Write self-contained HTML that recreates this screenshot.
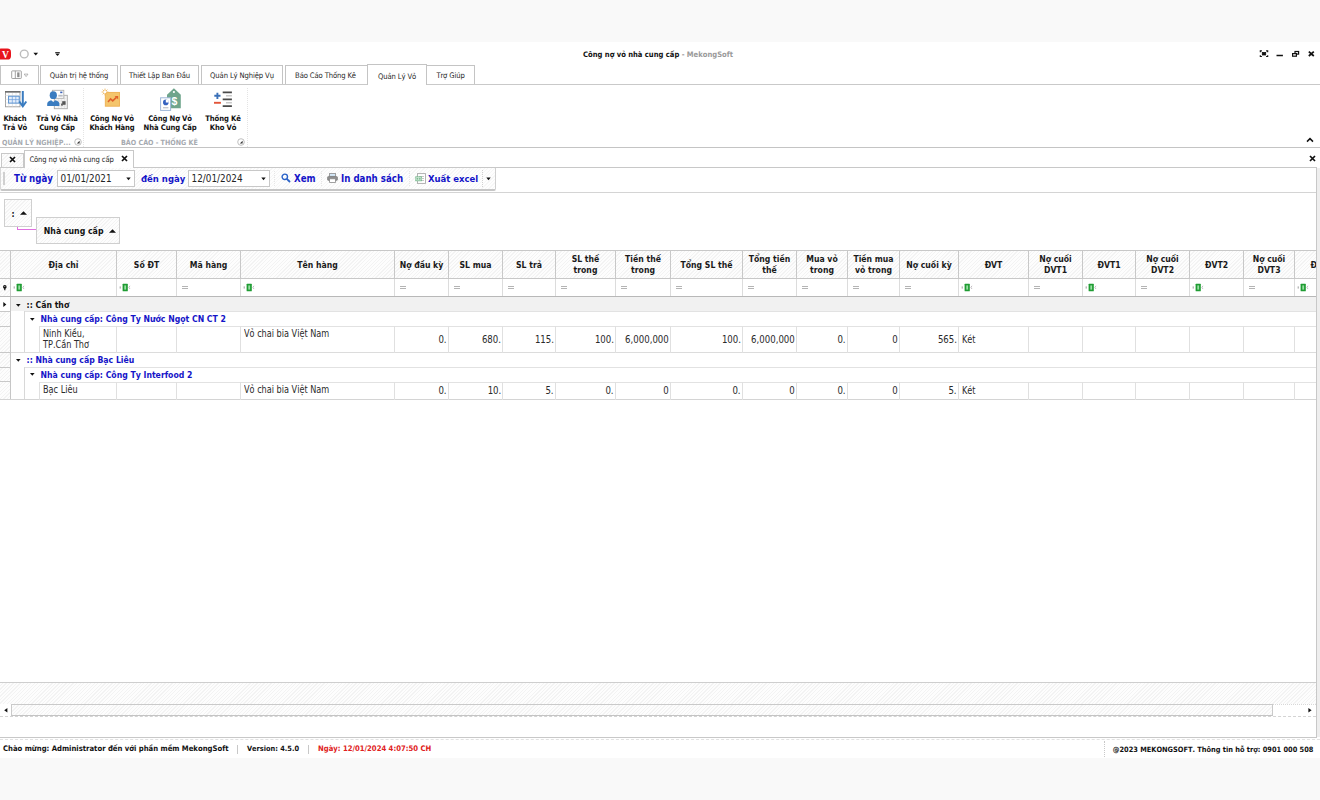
<!DOCTYPE html>
<html lang="vi"><head><meta charset="utf-8"><title>Công nợ vỏ nhà cung cấp - MekongSoft</title>
<style>
*{box-sizing:border-box;margin:0;padding:0}
html,body{width:1320px;height:800px;overflow:hidden;background:#f9f9f9;font-family:"DejaVu Sans Condensed","DejaVu Sans","Liberation Sans",sans-serif;font-size:8px;color:#222;font-kerning:none}
div,span,svg{position:absolute}
b,i{position:static}
#win{left:0;top:42px;width:1320px;height:716px;background:#fff;overflow:hidden}
.hatch2{background:repeating-linear-gradient(135deg,#fefefe 0,#fefefe 1.6px,#f6f6f6 1.6px,#f6f6f6 2.5px)}
.hatch{background:repeating-linear-gradient(135deg,#fdfdfd 0,#fdfdfd 1.6px,#f3f3f3 1.6px,#f3f3f3 2.5px)}
#title{left:0;top:0;width:1316px;height:23px;text-align:center;line-height:25.5px;font-weight:bold;font-size:7.57px;color:#111}
#title span{position:static;color:#9a9a9a}
.tab{top:23px;height:19px;border:1px solid #c4c4c4;border-bottom:none;background:#fff;text-align:center;line-height:20.8px;font-size:7.6px;letter-spacing:-.12px;color:#262626;white-space:nowrap}
.tab.act{top:22px;height:21px;line-height:23.6px;z-index:3}
#tabline{left:0;top:42px;width:1320px;height:1px;background:#c9c9c9}
#ribbon{left:0;top:43px;width:1320px;height:63px;border-bottom:1px solid #c4c4c4;background:#fff}
.rb{top:29px;text-align:center;font-weight:bold;font-size:7.6px;letter-spacing:-.1px;line-height:9px;color:#111;white-space:nowrap}
.rg{top:52.5px;font-weight:bold;font-size:7.1px;color:#a6aab0;white-space:nowrap}
.vsep{top:3px;height:59px;width:0;border-left:1px dotted #e4e4e4}
.ln{background:#c8c8c8}
.hd{top:0;height:28px;display:flex;align-items:center;justify-content:center;text-align:center;font-weight:bold;font-size:8.6px;line-height:11px;color:#1a1a1a;border-left:1px solid #c8c8c8;white-space:nowrap}
.hd b{display:block}
.cell{border-left:1px solid #e0e0e0;font-size:10px;color:#2a2a2a;white-space:nowrap;line-height:11.4px;overflow:hidden}
.sx{position:static;display:inline-block;transform:scaleX(.905);transform-origin:0 0}
.sn{position:static;display:inline-block;transform:scaleX(.955);transform-origin:100% 0}
.gr{font-weight:bold;font-size:8.65px;white-space:nowrap}
.blue{color:#1414c8}
.st{top:700.1px;font-weight:bold;font-size:7.65px;line-height:14px;white-space:nowrap;color:#111}
</style></head><body>
<div id="win">

<div id="title">Công nợ vỏ nhà cung cấp <span>- MekongSoft</span></div>
<svg style="left:0;top:6px" width="66" height="14" viewBox="0 48 66 14"><rect x="-3" y="48.6" width="14" height="10.9" rx="3.6" fill="#e8141c"/><text x="1.9" y="57.7" font-family="Liberation Serif,serif" font-weight="bold" font-size="9.6" fill="#fff">V</text><circle cx="24.25" cy="54" r="3.9" fill="#fff" stroke="#bcbcbc" stroke-width="1.4"/><path d="M33.4 52.7h4.7L35.75 55.4z" fill="#111"/><rect x="55.2" y="52.1" width="4.6" height=".9" fill="#222"/><path d="M55.2 53.5h4.6L57.5 55.9z" fill="#111"/></svg>
<svg style="left:1258px;top:6px" width="60" height="12" viewBox="1258 48 60 12"><g stroke="#111" fill="none"><rect x="1262.3" y="52.4" width="3.4" height="2.6" fill="#111" stroke="#111" stroke-width=".8"/><path d="M1260.3 52.2V50.9h1.6M1267.7 52.2V50.9h-1.6M1260.3 55.2v1.3h1.6M1267.7 55.2v1.3h-1.6" stroke-width="1.1"/><path d="M1276.5 55.5h6.4" stroke-width="1.5"/><rect x="1295" y="51.5" width="3.6" height="2.6" stroke-width="1.2"/><rect x="1292.6" y="53.6" width="3.8" height="2.6" fill="#fff" stroke-width="1.2"/><path d="M1308.8 51.6l5 4.4M1313.8 51.6l-5 4.4" stroke-width="1.7"/></g></svg>
<div id="tabline"></div>
<div class="tab" style="left:0;width:39px"></div>
<svg style="left:11px;top:28px;z-index:4" width="20" height="10" viewBox="11 70 20 10"><rect x="11.7" y="70.9" width="9.6" height="7.6" rx=".6" fill="#fff" stroke="#9a9a9a" stroke-width=".9"/><path d="M15.3 70.9v7.6" stroke="#9a9a9a" stroke-width=".9"/><rect x="17.2" y="72.4" width="2.3" height="4.8" fill="#8c8c8c"/><path d="M24.2 74.1h3.8L26.1 76.6z" fill="#fff" stroke="#9a9a9a" stroke-width=".7"/></svg>
<div class="tab" style="left:40px;width:78px">Quản trị hệ thống</div>
<div class="tab" style="left:120px;width:79px">Thiết Lập Ban Đầu</div>
<div class="tab" style="left:201px;width:82px">Quản Lý Nghiệp Vụ</div>
<div class="tab" style="left:285px;width:83px;padding-right:2px">Báo Cáo Thống Kê</div>
<div class="tab act" style="left:367px;width:60px">Quản Lý Vỏ</div>
<div class="tab" style="left:426px;width:49px">Trợ Giúp</div>
<div id="ribbon">
<div class="rb" style="left:-10px;width:50px">Khách<br>Trả Vỏ</div>
<div class="rb" style="left:27px;width:60px">Trả Vỏ Nhà<br>Cung Cấp</div>
<div class="rb" style="left:82px;width:60px">Công Nợ Vỏ<br>Khách Hàng</div>
<div class="rb" style="left:135px;width:70px">Công Nợ Vỏ<br>Nhà Cung Cấp</div>
<div class="rb" style="left:198px;width:50px">Thống Kê<br>Kho Vỏ</div>
<div class="rg" style="left:2px">QUẢN LÝ NGHIỆP...</div>
<div class="rg" style="left:121px">BÁO CÁO - THỐNG KÊ</div>
<div class="vsep" style="left:83px"></div><div class="vsep" style="left:247px"></div>
<svg style="left:0;top:0" width="260" height="30" viewBox="0 0 260 30"><rect x="5.5" y="6.8" width="14.5" height="15" fill="#fff" stroke="#9a9a9a" stroke-width="0.9"/><rect x="5" y="6" width="15.5" height="1.6" fill="#6e6e6e"/><path d="M8.8 8V21.5M12.4 8V21.5M16 8V21.5M5.5 10.5H20M5.5 14.3H20M5.5 18H20" stroke="#dcdcdc" stroke-width=".7" fill="none"/><rect x="8.6" y="11.2" width="10.6" height="6.9" fill="#e4eefa" stroke="#4a88cc" stroke-width=".9"/><path d="M12.3 11.2v6.9M15.8 11.2v6.9M8.6 14.6h10.6" stroke="#6a9edc" stroke-width=".7"/><path d="M22.8 6V20.5" stroke="#3a7cc0" stroke-width="2"/><path d="M19.3 16.5L22.8 21.3L26.3 16.5" fill="none" stroke="#3a7cc0" stroke-width="2"/><rect x="54.3" y="10.3" width="13" height="13.4" fill="#f4f4f4" stroke="#a8a8a8" stroke-width=".9"/><path d="M57 13.5h9M57 16h9M57 18.5h9M57 21h9M58.5 11v12M61.5 11v12M64.5 11v12" stroke="#dedede" stroke-width=".6"/><rect x="62.2" y="16.2" width="3.4" height="3.6" fill="#555"/><rect x="61" y="18.6" width="2" height="2" fill="#666"/><rect x="52.4" y="5.3" width="11.4" height="8" fill="#fff" stroke="#b0b0b0" stroke-width=".9"/><rect x="60.2" y="6.6" width="2.2" height="1.6" fill="#3a62b8"/><rect x="58.3" y="9.8" width="4.4" height="1.8" fill="#b8bcc4"/><ellipse cx="53.3" cy="10.2" rx="3.6" ry="3.9" fill="#3a7cc0"/><path d="M47.2 21v-2.2c0-2 2-3 4-3.6l2.1 1.9 2.1-1.9c2 .6 4 1.6 4 3.6v2.2z" fill="#3a7cc0"/><rect x="105.3" y="7.4" width="14.2" height="13.8" fill="#f4c56c" stroke="#eeb050" stroke-width=".9"/><path d="M108 17L110.6 13.9L112.7 15.9L116.4 12.4" fill="none" stroke="#e0602a" stroke-width="1.5"/><path d="M114.6 11L118.2 11L118.2 14.6z" fill="#e0602a"/><g stroke="#eeb860" stroke-width=".9"><path d="M105 3.6v6.8M101.6 7h6.8M102.6 4.6l4.8 4.8M107.4 4.6l-4.8 4.8"/></g><circle cx="105" cy="7" r="1.3" fill="#fff"/><path d="M173.9 3.3L180.8 9.8V23.3H167V9.8z" fill="#6fa58c"/><circle cx="173.9" cy="7" r="1.1" fill="#fff"/><text x="171.5" y="19.8" font-family="Liberation Sans,sans-serif" font-weight="bold" font-size="10.5" fill="#fff">$</text><rect x="160.6" y="12.8" width="10" height="12.6" fill="#fff" stroke="#9db6d8" stroke-width="1"/><circle cx="165.8" cy="17.4" r="2.8" fill="#3462c0"/><path d="M165.8 17.4V14.4A3 3 0 0 1 168.8 17.4z" fill="#fff"/><rect x="163" y="22" width="5.4" height="1.4" fill="#c4c8d0"/><path d="M217.4 7.7v6.2M214.3 10.8h6.2" stroke="#3a70b8" stroke-width="1.9"/><path d="M214 17.8h6.9" stroke="#e2553a" stroke-width="1.9"/><path d="M222.7 7.4h9.2M222.7 14.3h9.2M222.7 21.1h9.2" stroke="#4a4a4a" stroke-width="1.8"/><path d="M226 10.8h5.9M226 17.7h5.9" stroke="#c8c8c8" stroke-width="1.4"/></svg><svg style="left:74px;top:52.5px" width="8" height="8" viewBox="0 0 8 8"><circle cx="4" cy="4" r="3.3" fill="#fff" stroke="#b0b0b0" stroke-width=".8"/><path d="M5.6 2.8v2.8H2.8z" fill="#333"/></svg><svg style="left:237px;top:52.5px" width="8" height="8" viewBox="0 0 8 8"><circle cx="4" cy="4" r="3.3" fill="#fff" stroke="#b0b0b0" stroke-width=".8"/><path d="M5.6 2.8v2.8H2.8z" fill="#333"/></svg>
</div>
<svg style="left:1306px;top:95px" width="8" height="6" viewBox="0 0 8 6"><path d="M1 4.6L4 1.6l3 3" fill="none" stroke="#111" stroke-width="1.5"/></svg>
<div class="ln" style="left:0;top:125px;width:1317px;height:1px"></div>
<div class="hatch" style="left:1px;top:111px;width:23px;height:14px;border:1px solid #c8c8c8;border-bottom:none"></div>
<div style="left:24px;top:108px;width:110px;height:18px;border:1px solid #c8c8c8;border-bottom:none;background:#fff;font-size:7.6px;letter-spacing:-.12px;line-height:18px;padding-left:4.4px;color:#262626;white-space:nowrap">Công nợ vỏ nhà cung cấp</div>
<svg style="left:9px;top:114px" width="7" height="7" viewBox="0 0 7 7"><path d="M1 1l5 5M6 1l-5 5" stroke="#111" stroke-width="1.7" fill="none"/></svg>
<svg style="left:121px;top:113px" width="7" height="7" viewBox="0 0 7 7"><path d="M1 1l5 5M6 1l-5 5" stroke="#111" stroke-width="1.7" fill="none"/></svg>
<svg style="left:1309px;top:113px" width="7" height="7" viewBox="0 0 7 7"><path d="M1 1l5 5M6 1l-5 5" stroke="#111" stroke-width="1.7" fill="none"/></svg>
<div class="ln" style="left:1316px;top:125px;width:1px;height:570px"></div>
<div style="left:1317px;top:126px;width:3px;height:569px;background:#eeeeee"></div>
<div class="ln" style="left:0;top:695px;width:1317px;height:1px"></div>
<div class="hatch2" style="left:0;top:126px;width:495.5px;height:22.6px;border:1.3px solid #d0d0d0;border-bottom:2px solid #c6c6c6;border-top:none;border-left:1px solid #d8d8d8;border-radius:0 0 2px 2px"></div>
<div style="left:3px;top:130px;width:2px;height:13px;background:#d0d0d0"></div>
<div class="ln" style="left:0;top:150px;width:1316px;height:1px;background:#d4d4d4"></div>
<div style="left:14px;top:130.8px;font-weight:bold;font-size:9.65px;color:#1414c8;white-space:nowrap;line-height:12px">Từ ngày</div>
<div style="left:57px;top:128px;width:78px;height:17px;border:1px solid #c8c8c8;background:#fff;font-size:9.85px;line-height:16px;padding-left:2.6px;color:#222">01/01/2021</div>
<div style="left:141px;top:130.8px;font-weight:bold;font-size:9.65px;color:#1414c8;white-space:nowrap;line-height:12px;font-size:9.45px">đến ngày</div>
<div style="left:188px;top:128px;width:82px;height:17px;border:1px solid #c8c8c8;background:#fff;font-size:9.85px;line-height:16px;padding-left:2.6px;color:#222">12/01/2024</div>
<svg style="left:126px;top:135px" width="5" height="4" viewBox="0 0 5 4"><path d="M0.3 0.5h4.4L2.5 3.2z" fill="#111"/></svg>
<svg style="left:261px;top:135px" width="5" height="4" viewBox="0 0 5 4"><path d="M0.3 0.5h4.4L2.5 3.2z" fill="#111"/></svg>
<svg style="left:486px;top:135px" width="5" height="4" viewBox="0 0 5 4"><path d="M0.3 0.5h4.4L2.5 3.2z" fill="#111"/></svg>
<svg style="left:280.8px;top:131px" width="10" height="10" viewBox="0 0 10 10"><circle cx="3.8" cy="3.8" r="2.7" fill="none" stroke="#2a62c8" stroke-width="1.4"/><path d="M5.8 5.8L9 9" stroke="#2a62c8" stroke-width="1.8"/></svg>
<div style="left:294px;top:130.8px;font-weight:bold;font-size:9.65px;color:#1414c8;white-space:nowrap;line-height:12px">Xem</div>
<svg style="left:327px;top:131px" width="11" height="10" viewBox="0 0 11 10"><rect x="2.6" y="0.5" width="5.8" height="3.2" fill="#d4e8f8" stroke="#8a8a8a" stroke-width=".8"/><rect x="0.5" y="3.4" width="10" height="4" rx="1.2" fill="#8e8e8e" stroke="#777" stroke-width=".6"/><rect x="2.6" y="5.8" width="5.8" height="3.6" fill="#fff" stroke="#8a8a8a" stroke-width=".8"/></svg>
<div style="left:341px;top:130.8px;font-weight:bold;font-size:9.65px;color:#1414c8;white-space:nowrap;line-height:12px">In danh sách</div>
<svg style="left:415px;top:131px" width="11" height="11" viewBox="0 0 11 11"><rect x="2.5" y="0.6" width="8" height="9.8" fill="#fff" stroke="#aaaaaa" stroke-width=".9"/><path d="M4 3.5h5M4 5.5h5M4 7.5h5" stroke="#b8b8b8" stroke-width=".8"/><rect x="0.3" y="3.4" width="6.6" height="4.8" fill="#74b88a"/><path d="M1.2 4.6h4.8v2.4H1.2zM3.6 4.6v2.4" stroke="#e8f4ec" stroke-width=".7" fill="none"/></svg>
<div style="left:428px;top:130.8px;font-weight:bold;font-size:9.65px;color:#1414c8;white-space:nowrap;line-height:12px;font-size:9.45px">Xuất excel</div>
<div style="left:482px;top:128px;width:0;height:17px;border-left:1px dotted #d0d0d0"></div>
<div style="left:274px;top:129px;width:0;height:15px;border-left:1px dotted #e6e6e6"></div>
<div style="left:321px;top:129px;width:0;height:15px;border-left:1px dotted #e6e6e6"></div>
<div style="left:409px;top:129px;width:0;height:15px;border-left:1px dotted #e6e6e6"></div>
<div class="hatch" style="left:4px;top:157px;width:28px;height:28px;border:1px solid #cfcfcf"></div>
<div style="left:11.5px;top:166px;font-weight:bold;font-size:8.6px;line-height:12px;color:#111">:</div>
<svg style="left:20.3px;top:169px" width="7" height="4" viewBox="0 0 7 4"><path d="M0 3.8h7L3.5 0.2z" fill="#111"/></svg>
<div style="left:17px;top:185px;width:19px;height:3px;border-left:1px solid #e070e0;border-bottom:1px solid #e070e0"></div>
<div class="hatch" style="left:36px;top:175px;width:84px;height:27px;border:1px solid #cfcfcf;font-weight:bold;font-size:8.7px;line-height:26px;padding-left:6.8px;color:#111;white-space:nowrap">Nhà cung cấp</div>
<svg style="left:109px;top:186.6px" width="7" height="4" viewBox="0 0 7 4"><path d="M0 3.8h7L3.5 0.2z" fill="#111"/></svg>
<div class="ln" style="left:0;top:208px;width:1316px;height:1px"></div>
<div class="hatch" style="left:0;top:209px;width:1316px;height:28px;overflow:hidden">
<div class="hd" style="left:10px;width:106px"><span style="position:static">Địa chỉ</span></div>
<div class="hd" style="left:116px;width:60px"><span style="position:static">Số ĐT</span></div>
<div class="hd" style="left:176px;width:64px"><span style="position:static">Mã hàng</span></div>
<div class="hd" style="left:240px;width:154px"><span style="position:static">Tên hàng</span></div>
<div class="hd" style="left:394px;width:54px"><span style="position:static">Nợ đầu kỳ</span></div>
<div class="hd" style="left:448px;width:54px"><span style="position:static">SL mua</span></div>
<div class="hd" style="left:502px;width:53px"><span style="position:static">SL trả</span></div>
<div class="hd" style="left:555px;width:60px"><span style="position:static">SL thế<br>trong</span></div>
<div class="hd" style="left:615px;width:55px"><span style="position:static">Tiền thế<br>trong</span></div>
<div class="hd" style="left:670px;width:72px"><span style="position:static">Tổng SL thế</span></div>
<div class="hd" style="left:742px;width:54px"><span style="position:static">Tổng tiền<br>thế</span></div>
<div class="hd" style="left:796px;width:51px"><span style="position:static">Mua vỏ<br>trong</span></div>
<div class="hd" style="left:847px;width:52px"><span style="position:static">Tiền mua<br>vỏ trong</span></div>
<div class="hd" style="left:899px;width:59px"><span style="position:static">Nợ cuối kỳ</span></div>
<div class="hd" style="left:958px;width:70px"><span style="position:static">ĐVT</span></div>
<div class="hd" style="left:1028px;width:54px"><span style="position:static">Nợ cuối<br>DVT1</span></div>
<div class="hd" style="left:1082px;width:53px"><span style="position:static">ĐVT1</span></div>
<div class="hd" style="left:1135px;width:54px"><span style="position:static">Nợ cuối<br>DVT2</span></div>
<div class="hd" style="left:1189px;width:54px"><span style="position:static">ĐVT2</span></div>
<div class="hd" style="left:1243px;width:51px"><span style="position:static">Nợ cuối<br>DVT3</span></div>
<div class="hd" style="left:1294px;width:55px"><span style="position:static">ĐVT3</span></div>
</div>
<div class="ln" style="left:0;top:236px;width:1316px;height:1px"></div>
<div style="left:0;top:237px;width:1316px;height:17px;background:#fff;overflow:hidden">
<div style="left:10px;top:0;width:1px;height:17px;background:#dcdcdc"></div>
<svg style="left:13px;top:3.5px" width="12" height="9" viewBox="0 0 12 9"><rect x="3.6" y="0.7" width="5.2" height="7.5" rx=".5" fill="#1f9c33"/><rect x="5.3" y="2.4" width="1.8" height="4.2" fill="#9adfa4"/><path d="M1.2 3.4v2.2" stroke="#9a9a9a" stroke-width="1"/><path d="M11 2.8L9.9 4.4L11 6" stroke="#a8a0a8" stroke-width=".7" fill="none"/></svg>
<div style="left:116px;top:0;width:1px;height:17px;background:#dcdcdc"></div>
<svg style="left:119px;top:3.5px" width="12" height="9" viewBox="0 0 12 9"><rect x="3.6" y="0.7" width="5.2" height="7.5" rx=".5" fill="#1f9c33"/><rect x="5.3" y="2.4" width="1.8" height="4.2" fill="#9adfa4"/><path d="M1.2 3.4v2.2" stroke="#9a9a9a" stroke-width="1"/><path d="M11 2.8L9.9 4.4L11 6" stroke="#a8a0a8" stroke-width=".7" fill="none"/></svg>
<div style="left:176px;top:0;width:1px;height:17px;background:#dcdcdc"></div>
<div style="left:182px;top:7px;width:6px;height:1px;background:#b4b4b4"></div><div style="left:182px;top:9px;width:6px;height:1px;background:#b4b4b4"></div>
<div style="left:240px;top:0;width:1px;height:17px;background:#dcdcdc"></div>
<svg style="left:243px;top:3.5px" width="12" height="9" viewBox="0 0 12 9"><rect x="3.6" y="0.7" width="5.2" height="7.5" rx=".5" fill="#1f9c33"/><rect x="5.3" y="2.4" width="1.8" height="4.2" fill="#9adfa4"/><path d="M1.2 3.4v2.2" stroke="#9a9a9a" stroke-width="1"/><path d="M11 2.8L9.9 4.4L11 6" stroke="#a8a0a8" stroke-width=".7" fill="none"/></svg>
<div style="left:394px;top:0;width:1px;height:17px;background:#dcdcdc"></div>
<div style="left:400px;top:7px;width:6px;height:1px;background:#b4b4b4"></div><div style="left:400px;top:9px;width:6px;height:1px;background:#b4b4b4"></div>
<div style="left:448px;top:0;width:1px;height:17px;background:#dcdcdc"></div>
<div style="left:454px;top:7px;width:6px;height:1px;background:#b4b4b4"></div><div style="left:454px;top:9px;width:6px;height:1px;background:#b4b4b4"></div>
<div style="left:502px;top:0;width:1px;height:17px;background:#dcdcdc"></div>
<div style="left:508px;top:7px;width:6px;height:1px;background:#b4b4b4"></div><div style="left:508px;top:9px;width:6px;height:1px;background:#b4b4b4"></div>
<div style="left:555px;top:0;width:1px;height:17px;background:#dcdcdc"></div>
<div style="left:561px;top:7px;width:6px;height:1px;background:#b4b4b4"></div><div style="left:561px;top:9px;width:6px;height:1px;background:#b4b4b4"></div>
<div style="left:615px;top:0;width:1px;height:17px;background:#dcdcdc"></div>
<div style="left:621px;top:7px;width:6px;height:1px;background:#b4b4b4"></div><div style="left:621px;top:9px;width:6px;height:1px;background:#b4b4b4"></div>
<div style="left:670px;top:0;width:1px;height:17px;background:#dcdcdc"></div>
<div style="left:676px;top:7px;width:6px;height:1px;background:#b4b4b4"></div><div style="left:676px;top:9px;width:6px;height:1px;background:#b4b4b4"></div>
<div style="left:742px;top:0;width:1px;height:17px;background:#dcdcdc"></div>
<div style="left:748px;top:7px;width:6px;height:1px;background:#b4b4b4"></div><div style="left:748px;top:9px;width:6px;height:1px;background:#b4b4b4"></div>
<div style="left:796px;top:0;width:1px;height:17px;background:#dcdcdc"></div>
<div style="left:802px;top:7px;width:6px;height:1px;background:#b4b4b4"></div><div style="left:802px;top:9px;width:6px;height:1px;background:#b4b4b4"></div>
<div style="left:847px;top:0;width:1px;height:17px;background:#dcdcdc"></div>
<div style="left:853px;top:7px;width:6px;height:1px;background:#b4b4b4"></div><div style="left:853px;top:9px;width:6px;height:1px;background:#b4b4b4"></div>
<div style="left:899px;top:0;width:1px;height:17px;background:#dcdcdc"></div>
<div style="left:905px;top:7px;width:6px;height:1px;background:#b4b4b4"></div><div style="left:905px;top:9px;width:6px;height:1px;background:#b4b4b4"></div>
<div style="left:958px;top:0;width:1px;height:17px;background:#dcdcdc"></div>
<svg style="left:961px;top:3.5px" width="12" height="9" viewBox="0 0 12 9"><rect x="3.6" y="0.7" width="5.2" height="7.5" rx=".5" fill="#1f9c33"/><rect x="5.3" y="2.4" width="1.8" height="4.2" fill="#9adfa4"/><path d="M1.2 3.4v2.2" stroke="#9a9a9a" stroke-width="1"/><path d="M11 2.8L9.9 4.4L11 6" stroke="#a8a0a8" stroke-width=".7" fill="none"/></svg>
<div style="left:1028px;top:0;width:1px;height:17px;background:#dcdcdc"></div>
<div style="left:1034px;top:7px;width:6px;height:1px;background:#b4b4b4"></div><div style="left:1034px;top:9px;width:6px;height:1px;background:#b4b4b4"></div>
<div style="left:1082px;top:0;width:1px;height:17px;background:#dcdcdc"></div>
<svg style="left:1085px;top:3.5px" width="12" height="9" viewBox="0 0 12 9"><rect x="3.6" y="0.7" width="5.2" height="7.5" rx=".5" fill="#1f9c33"/><rect x="5.3" y="2.4" width="1.8" height="4.2" fill="#9adfa4"/><path d="M1.2 3.4v2.2" stroke="#9a9a9a" stroke-width="1"/><path d="M11 2.8L9.9 4.4L11 6" stroke="#a8a0a8" stroke-width=".7" fill="none"/></svg>
<div style="left:1135px;top:0;width:1px;height:17px;background:#dcdcdc"></div>
<div style="left:1141px;top:7px;width:6px;height:1px;background:#b4b4b4"></div><div style="left:1141px;top:9px;width:6px;height:1px;background:#b4b4b4"></div>
<div style="left:1189px;top:0;width:1px;height:17px;background:#dcdcdc"></div>
<svg style="left:1192px;top:3.5px" width="12" height="9" viewBox="0 0 12 9"><rect x="3.6" y="0.7" width="5.2" height="7.5" rx=".5" fill="#1f9c33"/><rect x="5.3" y="2.4" width="1.8" height="4.2" fill="#9adfa4"/><path d="M1.2 3.4v2.2" stroke="#9a9a9a" stroke-width="1"/><path d="M11 2.8L9.9 4.4L11 6" stroke="#a8a0a8" stroke-width=".7" fill="none"/></svg>
<div style="left:1243px;top:0;width:1px;height:17px;background:#dcdcdc"></div>
<div style="left:1249px;top:7px;width:6px;height:1px;background:#b4b4b4"></div><div style="left:1249px;top:9px;width:6px;height:1px;background:#b4b4b4"></div>
<div style="left:1294px;top:0;width:1px;height:17px;background:#dcdcdc"></div>
<svg style="left:1297px;top:3.5px" width="12" height="9" viewBox="0 0 12 9"><rect x="3.6" y="0.7" width="5.2" height="7.5" rx=".5" fill="#1f9c33"/><rect x="5.3" y="2.4" width="1.8" height="4.2" fill="#9adfa4"/><path d="M1.2 3.4v2.2" stroke="#9a9a9a" stroke-width="1"/><path d="M11 2.8L9.9 4.4L11 6" stroke="#a8a0a8" stroke-width=".7" fill="none"/></svg>
</div>
<div style="left:0;top:254px;width:1316px;height:1px;background:#b8b8b8"></div>
<div class="hatch" style="left:0;top:255px;width:11px;height:103px;border-right:1px solid #c6c6c6"></div>
<div class="hatch2" style="left:0;top:237px;width:11px;height:17px;border-right:1px solid #c6c6c6"></div>
<svg style="left:2px;top:243px" width="6" height="6" viewBox="0 0 6 6"><circle cx="2.8" cy="1.9" r="1.8" fill="#111"/><path d="M2.8 2v3.2" stroke="#111" stroke-width="1.2"/><circle cx="2.8" cy="1.5" r=".5" fill="#ddd"/></svg>
<div style="left:0;top:255px;width:11px;height:14px;background:#fff;border-right:1px solid #c6c6c6"></div>
<div style="left:0;top:269px;width:10px;height:1px;background:#c8c8c8"></div>
<div style="left:0;top:284px;width:10px;height:1px;background:#c8c8c8"></div>
<div style="left:0;top:310px;width:10px;height:1px;background:#c8c8c8"></div>
<div style="left:0;top:325px;width:10px;height:1px;background:#c8c8c8"></div>
<div style="left:0;top:339px;width:10px;height:1px;background:#c8c8c8"></div>
<svg style="left:3px;top:260.2px" width="4" height="5" viewBox="0 0 4 5"><path d="M0.3 0v5L3.3 2.5z" fill="#111"/></svg>
<div style="left:11px;top:255px;width:1305px;height:14.4px;background:#f1f1f1"></div>
<div style="left:24px;top:269px;width:1292px;height:1px;background:#e2e2e2"></div>
<div style="left:39px;top:283.6px;width:1277px;height:1px;background:#e2e2e2"></div>
<div style="left:11px;top:310px;width:1305px;height:1px;background:#dcdcdc"></div>
<div style="left:24px;top:325px;width:1292px;height:1px;background:#e2e2e2"></div>
<div style="left:39px;top:339.6px;width:1277px;height:1px;background:#e2e2e2"></div>
<div style="left:0px;top:357px;width:1316px;height:1px;background:#d4d4d4"></div>
<div style="left:24px;top:269px;width:1px;height:41px;background:#d8d8d8"></div>
<div style="left:24px;top:325px;width:1px;height:32px;background:#d8d8d8"></div>
<svg style="left:15.5px;top:261.5px" width="5" height="3" viewBox="0 0 5 3"><path d="M0 0h4.6L2.3 2.8z" fill="#111"/></svg>
<div class="gr" style="left:26.6px;top:256.9px;line-height:12px;color:#111">:: Cần thơ</div>
<svg style="left:29.5px;top:275.8px" width="5" height="3" viewBox="0 0 5 3"><path d="M0 0h4.6L2.3 2.8z" fill="#111"/></svg>
<div class="gr blue" style="left:40.6px;top:271.2px;line-height:12px;">Nhà cung cấp: Công Ty Nước Ngọt CN CT 2</div>
<svg style="left:15.5px;top:316.6px" width="5" height="3" viewBox="0 0 5 3"><path d="M0 0h4.6L2.3 2.8z" fill="#111"/></svg>
<div class="gr blue" style="left:26.6px;top:312.0px;line-height:12px;">:: Nhà cung cấp Bạc Liêu</div>
<svg style="left:29.5px;top:331.3px" width="5" height="3" viewBox="0 0 5 3"><path d="M0 0h4.6L2.3 2.8z" fill="#111"/></svg>
<div class="gr blue" style="left:40.6px;top:326.7px;line-height:12px;">Nhà cung cấp: Công Ty Interfood 2</div>
<div style="left:39px;top:284px;width:1277px;height:27px;overflow:hidden">
<div class="cell" style="left:0px;top:0;width:77px;height:27px;padding-left:3px;padding-top:1.6px"><span class="sx">Ninh Kiều,<br>TP.Cần Thơ</span></div>
<div class="cell" style="left:77px;top:0;width:60px;height:27px;padding-left:3px;padding-top:1.6px"></div>
<div class="cell" style="left:137px;top:0;width:64px;height:27px;padding-left:3px;padding-top:1.6px"></div>
<div class="cell" style="left:201px;top:0;width:154px;height:27px;padding-left:3px;padding-top:1.6px"><span class="sx">Vỏ chai bia Việt Nam</span></div>
<div class="cell" style="left:355px;top:0;width:54px;height:27px;padding-right:1px;text-align:right;line-height:27px"><span class="sn">0.</span></div>
<div class="cell" style="left:409px;top:0;width:54px;height:27px;padding-right:1px;text-align:right;line-height:27px"><span class="sn">680.</span></div>
<div class="cell" style="left:463px;top:0;width:53px;height:27px;padding-right:1px;text-align:right;line-height:27px"><span class="sn">115.</span></div>
<div class="cell" style="left:516px;top:0;width:60px;height:27px;padding-right:1px;text-align:right;line-height:27px"><span class="sn">100.</span></div>
<div class="cell" style="left:576px;top:0;width:55px;height:27px;padding-right:1px;text-align:right;line-height:27px"><span class="sn">6,000,000</span></div>
<div class="cell" style="left:631px;top:0;width:72px;height:27px;padding-right:1px;text-align:right;line-height:27px"><span class="sn">100.</span></div>
<div class="cell" style="left:703px;top:0;width:54px;height:27px;padding-right:1px;text-align:right;line-height:27px"><span class="sn">6,000,000</span></div>
<div class="cell" style="left:757px;top:0;width:51px;height:27px;padding-right:1px;text-align:right;line-height:27px"><span class="sn">0.</span></div>
<div class="cell" style="left:808px;top:0;width:52px;height:27px;padding-right:1px;text-align:right;line-height:27px"><span class="sn">0</span></div>
<div class="cell" style="left:860px;top:0;width:59px;height:27px;padding-right:1px;text-align:right;line-height:27px"><span class="sn">565.</span></div>
<div class="cell" style="left:919px;top:0;width:70px;height:27px;padding-left:3px;line-height:27px"><span class="sx">Két</span></div>
<div class="cell" style="left:989px;top:0;width:54px;height:27px;padding-left:3px;padding-top:1.6px"></div>
<div class="cell" style="left:1043px;top:0;width:53px;height:27px;padding-left:3px;padding-top:1.6px"></div>
<div class="cell" style="left:1096px;top:0;width:54px;height:27px;padding-left:3px;padding-top:1.6px"></div>
<div class="cell" style="left:1150px;top:0;width:54px;height:27px;padding-left:3px;padding-top:1.6px"></div>
<div class="cell" style="left:1204px;top:0;width:51px;height:27px;padding-left:3px;padding-top:1.6px"></div>
<div class="cell" style="left:1255px;top:0;width:55px;height:27px;padding-left:3px;padding-top:1.6px"></div>
</div>
<div style="left:39px;top:340px;width:1277px;height:18px;overflow:hidden">
<div class="cell" style="left:0px;top:0;width:77px;height:18px;padding-left:3px;padding-top:1.6px"><span class="sx">Bạc Liêu</span></div>
<div class="cell" style="left:77px;top:0;width:60px;height:18px;padding-left:3px;padding-top:1.6px"></div>
<div class="cell" style="left:137px;top:0;width:64px;height:18px;padding-left:3px;padding-top:1.6px"></div>
<div class="cell" style="left:201px;top:0;width:154px;height:18px;padding-left:3px;padding-top:1.6px"><span class="sx">Vỏ chai bia Việt Nam</span></div>
<div class="cell" style="left:355px;top:0;width:54px;height:18px;padding-right:1px;text-align:right;line-height:18px"><span class="sn">0.</span></div>
<div class="cell" style="left:409px;top:0;width:54px;height:18px;padding-right:1px;text-align:right;line-height:18px"><span class="sn">10.</span></div>
<div class="cell" style="left:463px;top:0;width:53px;height:18px;padding-right:1px;text-align:right;line-height:18px"><span class="sn">5.</span></div>
<div class="cell" style="left:516px;top:0;width:60px;height:18px;padding-right:1px;text-align:right;line-height:18px"><span class="sn">0.</span></div>
<div class="cell" style="left:576px;top:0;width:55px;height:18px;padding-right:1px;text-align:right;line-height:18px"><span class="sn">0</span></div>
<div class="cell" style="left:631px;top:0;width:72px;height:18px;padding-right:1px;text-align:right;line-height:18px"><span class="sn">0.</span></div>
<div class="cell" style="left:703px;top:0;width:54px;height:18px;padding-right:1px;text-align:right;line-height:18px"><span class="sn">0</span></div>
<div class="cell" style="left:757px;top:0;width:51px;height:18px;padding-right:1px;text-align:right;line-height:18px"><span class="sn">0.</span></div>
<div class="cell" style="left:808px;top:0;width:52px;height:18px;padding-right:1px;text-align:right;line-height:18px"><span class="sn">0</span></div>
<div class="cell" style="left:860px;top:0;width:59px;height:18px;padding-right:1px;text-align:right;line-height:18px"><span class="sn">5.</span></div>
<div class="cell" style="left:919px;top:0;width:70px;height:18px;padding-left:3px;line-height:18px"><span class="sx">Két</span></div>
<div class="cell" style="left:989px;top:0;width:54px;height:18px;padding-left:3px;padding-top:1.6px"></div>
<div class="cell" style="left:1043px;top:0;width:53px;height:18px;padding-left:3px;padding-top:1.6px"></div>
<div class="cell" style="left:1096px;top:0;width:54px;height:18px;padding-left:3px;padding-top:1.6px"></div>
<div class="cell" style="left:1150px;top:0;width:54px;height:18px;padding-left:3px;padding-top:1.6px"></div>
<div class="cell" style="left:1204px;top:0;width:51px;height:18px;padding-left:3px;padding-top:1.6px"></div>
<div class="cell" style="left:1255px;top:0;width:55px;height:18px;padding-left:3px;padding-top:1.6px"></div>
</div>
<div style="left:0;top:640px;width:1316px;height:1px;background:#cecece"></div>
<div class="hatch" style="left:0;top:641px;width:1316px;height:21px"></div>
<div style="left:0;top:662px;width:1316px;height:13.4px;background:#fff;border-bottom:1px dashed #d4d4d4"></div>
<div style="left:1273px;top:662px;width:43px;height:0;border-top:1px dotted #d8d8d8"></div>
<div class="hatch" style="left:11px;top:662px;width:1262px;height:12px;border:1px solid #cacaca;border-bottom:1.6px solid #c4c4c4"></div>
<svg style="left:3.5px;top:666.3px" width="4" height="5" viewBox="0 0 4 5"><path d="M3.4 0v4.6L0.2 2.3z" fill="#111"/></svg>
<svg style="left:1308px;top:666.3px" width="4" height="5" viewBox="0 0 4 5"><path d="M0.4 0v4.6L3.6 2.3z" fill="#111"/></svg>
<div style="left:0;top:697px;width:1320px;height:0;border-top:1px dashed #e2e2e2"></div>
<div class="st" style="left:3px">Chào mừng: Administrator đến với phần mềm MekongSoft</div>
<div class="st" style="left:247px;font-size:7.35px">Version: 4.5.0</div>
<div class="st" style="left:318px;color:#e02020">Ngày: 12/01/2024 4:07:50 CH</div>
<div class="st" style="left:1112.8px;top:700.8px;font-size:7.37px">@2023 MEKONGSOFT. Thông tin hỗ trợ: 0901 000 508</div>
<div style="left:237px;top:703px;width:1px;height:9px;background:#c8c8c8"></div>
<div style="left:308px;top:703px;width:1px;height:9px;background:#c8c8c8"></div>
<div style="left:1104px;top:699px;width:0;height:16px;border-left:1px dotted #c8c8c8"></div>
</div></body></html>
